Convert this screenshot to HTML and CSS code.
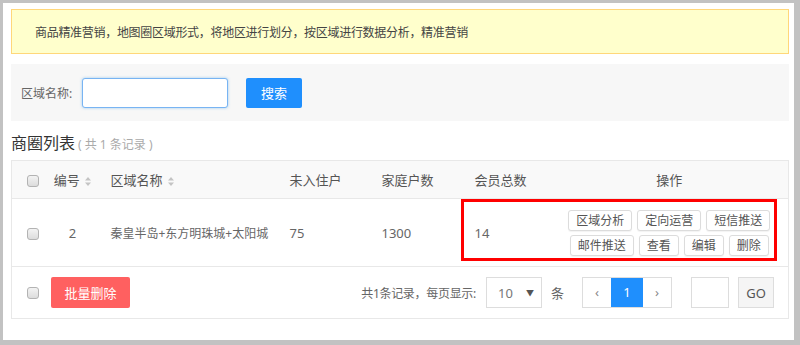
FILE: index.html
```html
<!DOCTYPE html>
<html lang="zh-CN">
<head>
    <meta charset="UTF-8">
    <title>商圈列表</title>
    <link rel="stylesheet" href="styles.css">
</head>
<body>
    <div class="panel">
        <div class="notice">商品精准营销，地图圈区域形式，将地区进行划分，按区域进行数据分析，精准营销</div>

        <div class="search">
            <label class="search-label">区域名称:</label>
            <input type="text" class="search-input">
            <button class="btn-primary">搜索</button>
        </div>

        <div class="list-title">商圈列表<span class="count">( 共 1 条记录 )</span></div>

        <table class="grid">
            <colgroup>
                <col style="width:34px">
                <col style="width:55px">
                <col style="width:179px">
                <col style="width:92px">
                <col style="width:93px">
                <col style="width:87px">
                <col>
            </colgroup>
            <thead>
                <tr>
                    <th class="c-check"><span class="check"></span></th>
                    <th class="c-center">编号 <svg class="sort" width="6" height="9" viewBox="0 0 6 9"><path d="M3 0L6 3.5H0z M3 9L6 5.5H0z" fill="#c4c4c4"/></svg></th>
                    <th>区域名称 <svg class="sort" width="6" height="9" viewBox="0 0 6 9"><path d="M3 0L6 3.5H0z M3 9L6 5.5H0z" fill="#c4c4c4"/></svg></th>
                    <th>未入住户</th>
                    <th>家庭户数</th>
                    <th>会员总数</th>
                    <th class="c-center">操作</th>
                </tr>
            </thead>
            <tbody>
                <tr>
                    <td class="c-check"><span class="check"></span></td>
                    <td class="c-center">2</td>
                    <td class="nowrap">秦皇半岛+东方明珠城+太阳城</td>
                    <td>75</td>
                    <td>1300</td>
                    <td>14</td>
                    <td class="c-ops">
                        <div class="actions">
                            <div class="action-row">
                                <button class="btn-sm">区域分析</button>
                                <button class="btn-sm">定向运营</button>
                                <button class="btn-sm">短信推送</button>
                            </div>
                            <div class="action-row">
                                <button class="btn-sm">邮件推送</button>
                                <button class="btn-sm">查看</button>
                                <button class="btn-sm">编辑</button>
                                <button class="btn-sm">删除</button>
                            </div>
                        </div>
                    </td>
                </tr>
            </tbody>
        </table>

        <div class="grid-footer">
            <span class="check"></span>
            <button class="btn-danger">批量删除</button>
            <div class="pager">
                <span class="pager-text">共1条记录，每页显示:</span>
                <div class="page-size"><span>10</span><span class="caret">▼</span></div>
                <span class="pager-unit">条</span>
                <div class="pages">
                    <span class="page">‹</span>
                    <span class="page active">1</span>
                    <span class="page">›</span>
                </div>
                <input type="text" class="jump-input">
                <button class="btn-go">GO</button>
            </div>
        </div>

        <div class="highlight"></div>
    </div>
</body>
</html>
```

FILE: styles.css
```css
* {
    box-sizing: border-box;
}
body {
    margin: 0;
    background: #c2c2c2;
    font-family: "Noto Sans", "Noto Sans CJK SC", sans-serif;
    font-size: 12px;
    color: #555;
}
.panel {
    position: relative;
    background: #fff;
    margin: 3px 6px 0 3px;
    height: 337px;
    padding: 6px 5px 0 8px;
}
.notice {
    height: 45px;
    line-height: 45px;
    padding-left: 23px;
    background: #ffffcc;
    border: 1px solid #ffd77a;
    color: #444;
    letter-spacing: -0.3px;
}
.search {
    display: flex;
    align-items: center;
    height: 57px;
    margin-top: 10px;
    padding-left: 10px;
    background: #f7f7f7;
}
.search-label {
    color: #666;
    width: 61px;
}
.search-input {
    width: 146px;
    height: 30px;
    border: 1px solid #78b4f3;
    border-radius: 3px;
    box-shadow: 0 0 3px rgba(102, 175, 233, 0.6);
    outline: none;
}
.btn-primary {
    margin-left: 18px;
    width: 56px;
    height: 30px;
    border: none;
    border-radius: 2px;
    background: #1f8ffd;
    color: #fff;
    font-family: inherit;
    font-size: 13px;
}
.list-title {
    height: 39px;
    padding-top: 11px;
    line-height: 22px;
    font-size: 16px;
    color: #333;
}
.count {
    font-size: 12px;
    color: #aaa;
    margin-left: 3px;
}
.grid {
    width: 100%;
    table-layout: fixed;
    border-collapse: collapse;
    border: 1px solid #e8e8e8;
}
.grid th {
    height: 38px;
    background: #f9f9f9;
    font-weight: normal;
    font-size: 13px;
    color: #555;
    text-align: left;
    padding-left: 10px;
    border-bottom: 1px solid #e8e8e8;
}
.grid td {
    height: 68px;
    font-size: 13px;
    color: #666;
    padding-left: 10px;
    border-bottom: 1px solid #e8e8e8;
}
.grid .c-check {
    padding-left: 15px;
}
.grid .c-center {
    text-align: center;
    padding-left: 0;
}
.grid .c-ops {
    padding-left: 0;
}
.grid .nowrap {
    white-space: nowrap;
    font-size: 12px;
}
.sort {
    vertical-align: -1px;
    margin-left: 2px;
}
.check {
    display: inline-block;
    width: 12px;
    height: 12px;
    border: 1px solid #b3b3b3;
    border-radius: 3px;
    background: linear-gradient(#f3f3f3, #dcdcdc);
    vertical-align: middle;
}
.actions {
    display: flex;
    flex-direction: column;
    gap: 4px;
}
.action-row {
    display: flex;
    justify-content: center;
    gap: 5px;
}
.btn-sm {
    height: 21px;
    padding: 0 7px;
    border: 1px solid #dcdcdc;
    border-radius: 3px;
    background: #fff;
    color: #555;
    font-family: inherit;
    font-size: 12px;
    line-height: 19px;
    box-shadow: 0 1px 1px rgba(0, 0, 0, 0.05);
}
.grid-footer {
    display: flex;
    align-items: center;
    height: 52px;
    padding: 0 14px 0 15px;
    border: 1px solid #e8e8e8;
    border-top: none;
}
.btn-danger {
    margin-left: 12px;
    width: 79px;
    height: 31px;
    border: none;
    border-radius: 2px;
    background: #ff6060;
    color: #fff;
    font-family: inherit;
    font-size: 13px;
}
.pager {
    display: flex;
    align-items: center;
    margin-left: auto;
    color: #666;
}
.pager-text {
    letter-spacing: -0.3px;
}
.page-size {
    display: flex;
    align-items: center;
    justify-content: space-between;
    margin-left: 10px;
    width: 56px;
    height: 31px;
    padding: 0 7px 0 11px;
    border: 1px solid #ddd;
    font-size: 13px;
    color: #777;
}
.caret {
    font-size: 8px;
    color: #555;
}
.pager-unit {
    margin-left: 9px;
    font-size: 13px;
}
.pages {
    display: flex;
    margin-left: 18px;
    border: 1px solid #ddd;
}
.page {
    width: 28px;
    height: 29px;
    line-height: 29px;
    text-align: center;
    color: #888;
    font-size: 13px;
}
.page.active {
    width: 32px;
    background: #1f8ffd;
    color: #fff;
}
.jump-input {
    margin-left: 19px;
    width: 38px;
    height: 31px;
    border: 1px solid #ddd;
    outline: none;
}
.btn-go {
    margin-left: 9px;
    width: 36px;
    height: 31px;
    border: 1px solid #ddd;
    background: #f5f5f5;
    color: #555;
    font-family: inherit;
    font-size: 13px;
}
.highlight {
    position: absolute;
    left: 458px;
    top: 196px;
    width: 316px;
    height: 62px;
    border: 3px solid #ff0000;
    pointer-events: none;
}
```
